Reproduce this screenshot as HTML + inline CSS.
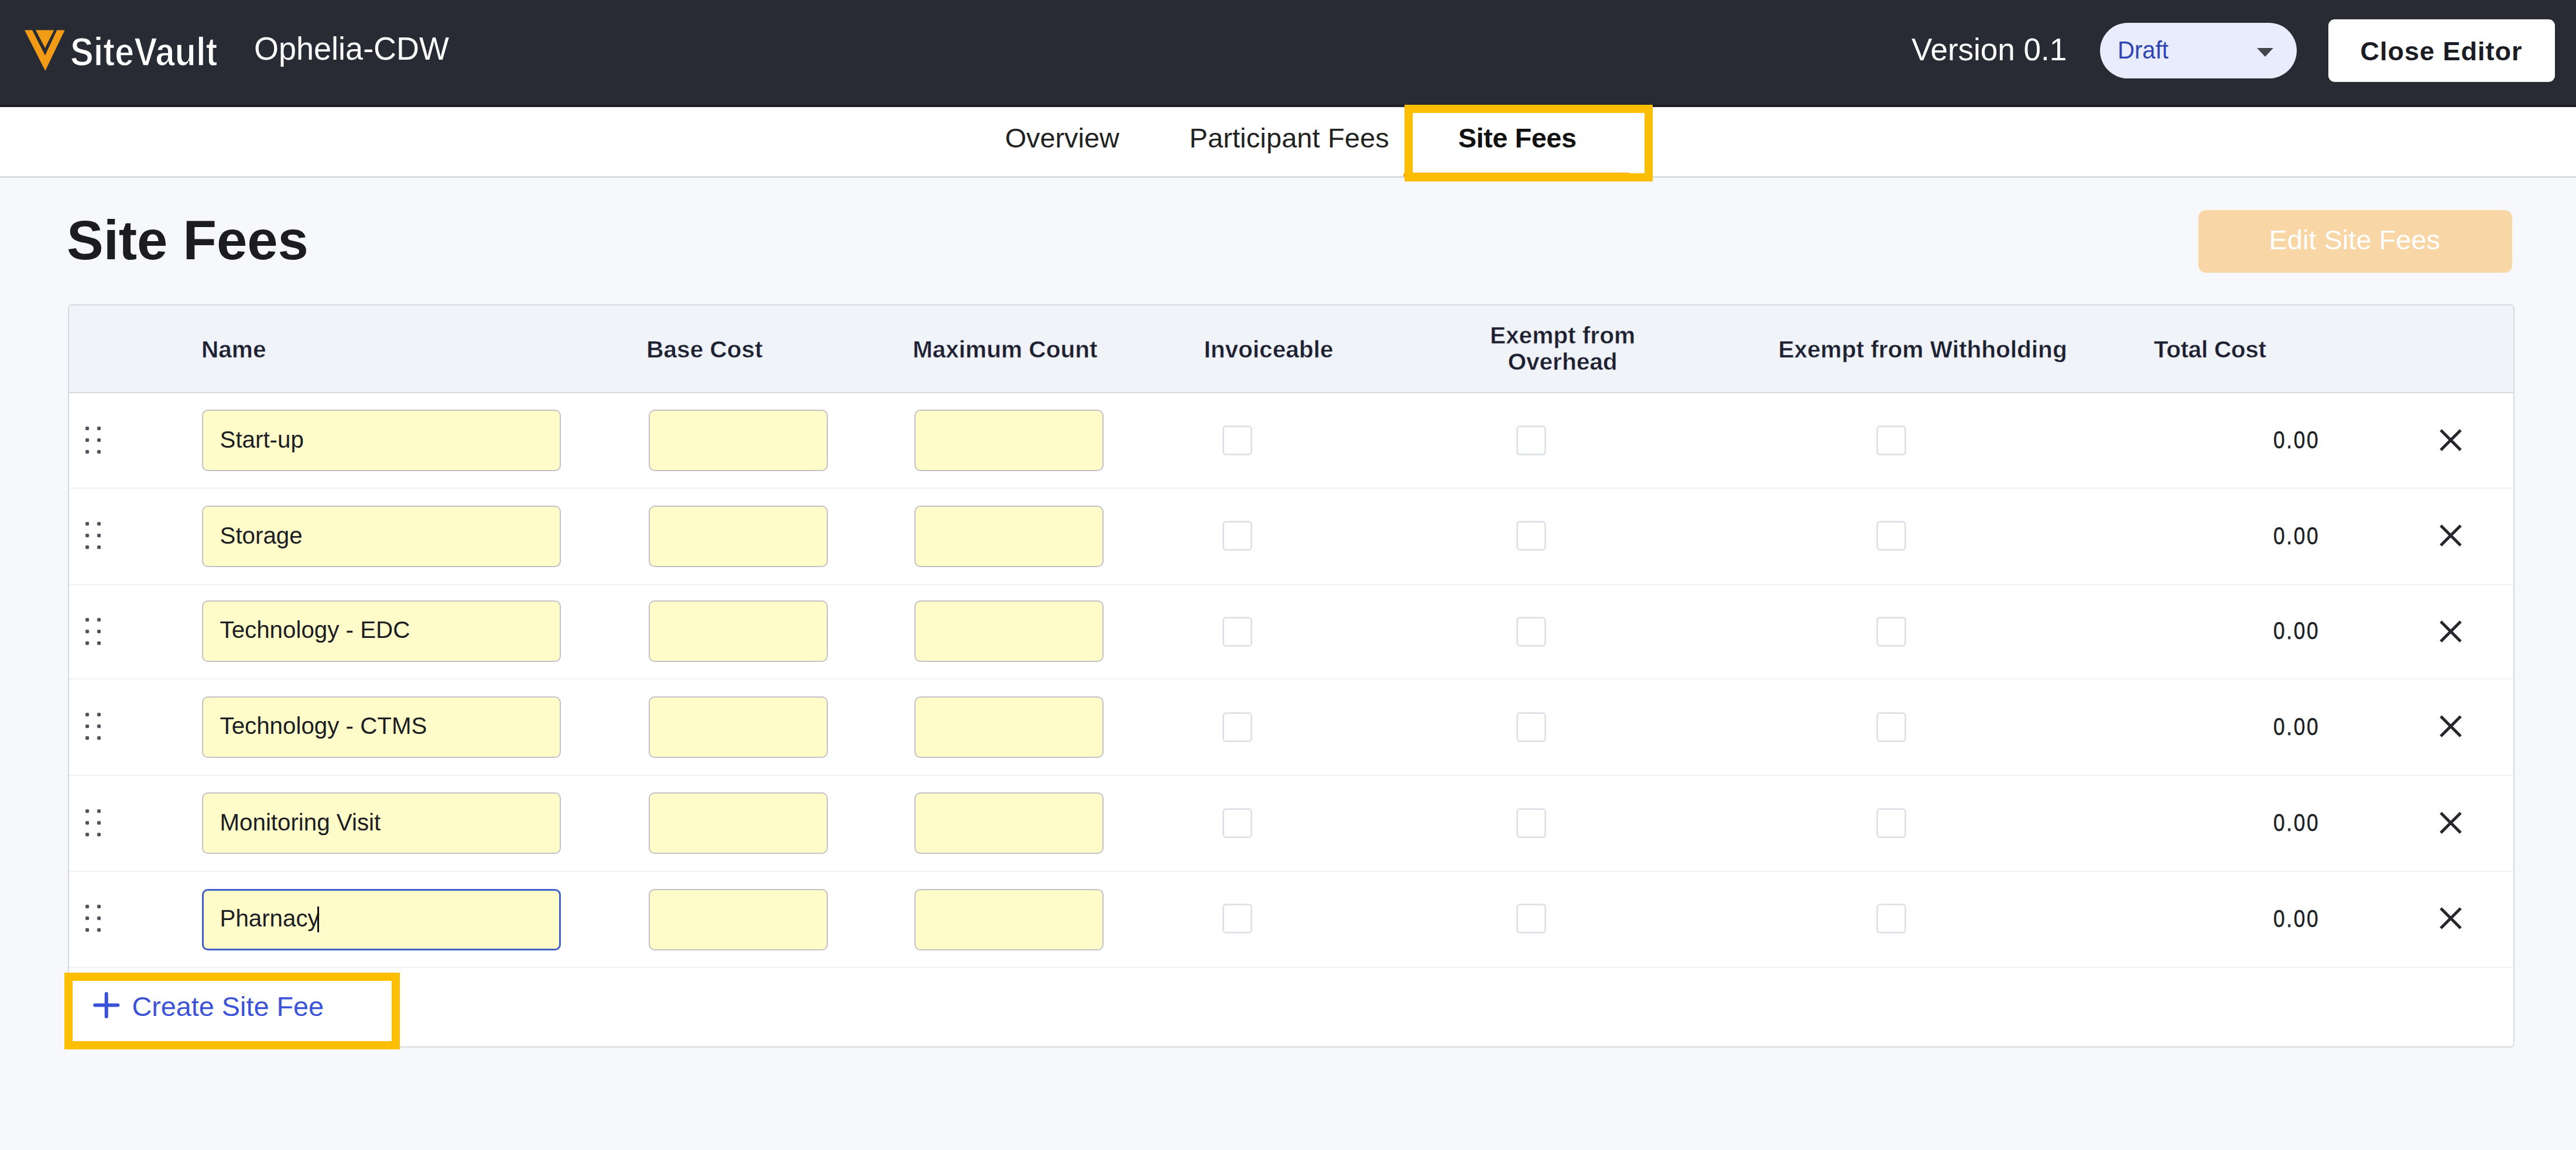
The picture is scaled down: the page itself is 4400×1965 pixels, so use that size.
<!DOCTYPE html>
<html>
<head>
<meta charset="utf-8">
<style>
html,body{margin:0;padding:0;}
body{width:4400px;height:1965px;position:relative;overflow:hidden;background:#f7f8fc;font-family:"Liberation Sans",sans-serif;color:#1d1f27;}
.a{position:absolute;}
.t{position:absolute;line-height:1;white-space:nowrap;}
.hl{position:absolute;border:14px solid #fdbe00;box-sizing:border-box;}
.th{font-weight:700;color:#1d2030;}
.inp{position:absolute;box-sizing:border-box;height:105px;border:2px solid #c3c2c7;border-radius:10px;background:#fffcca;}
.cb{position:absolute;width:51px;height:51px;box-sizing:border-box;border:3px solid #e0e3e8;border-radius:6px;background:#fff;}
.dot{position:absolute;width:6px;height:6px;background:#50535b;border-radius:2px;box-shadow:0 0 1.2px rgba(80,83,91,0.6);}
</style>
</head>
<body>
<div class="a" style="left:0;top:0;width:4400px;height:182.5px;background:#282b34;"></div>
<div class="a" style="left:0;top:179px;width:4400px;height:3px;background:#1c1e26;"></div>
<svg class="a" style="left:0;top:0" width="200" height="182" viewBox="0 0 200 182"><path fill="#f29b16" fill-rule="evenodd" d="M42,51.6 L110.6,51.6 L77.3,121 Z M55,51.6 L97.3,51.6 L77,94.8 Z M60.9,51.6 L92.2,51.6 L77,81.9 Z"/></svg>
<div class="t" style="left:120.0px;top:53.5px;font-size:69px;font-weight:700;color:#fff;transform:scaleX(0.862);transform-origin:0 0;-webkit-text-stroke:1.5px #282b34;">SiteVault</div>
<div class="t" style="left:434.4px;top:56.3px;font-size:55.5px;color:#fff;transform:scaleX(0.973);transform-origin:0 0;">Ophelia-CDW</div>
<div class="t" style="left:3265.0px;top:58.1px;font-size:53px;color:#fff;">Version 0.1</div>
<div class="a" style="left:3587px;top:39px;width:336px;height:95px;border-radius:48px;background:#e8ecfd;"></div>
<div class="t" style="left:3616.5px;top:65.0px;font-size:42px;color:#2e45b4;transform:scaleX(0.955);transform-origin:0 0;">Draft</div>
<svg class="a" style="left:3850px;top:78px" width="40" height="24" viewBox="0 0 40 24"><path d="M5,4 L33,4 L19,19 Z" fill="#45464b"/></svg>
<div class="a" style="left:3977px;top:33px;width:387px;height:107px;border-radius:11px;background:#fff;"></div>
<div class="t" style="left:4031.4px;top:65.1px;font-size:45px;font-weight:700;color:#1c1d24;letter-spacing:1px;">Close Editor</div>
<div class="a" style="left:0;top:182.5px;width:4400px;height:118.5px;background:#fff;border-bottom:3px solid #d8dbe0;"></div>
<div class="t" style="left:1716.7px;top:212.6px;font-size:46.8px;color:#222;">Overview</div>
<div class="t" style="left:2031.5px;top:212.6px;font-size:46.8px;color:#222;letter-spacing:0.2px;">Participant Fees</div>
<div class="t" style="left:2490.7px;top:212.6px;font-size:46.8px;font-weight:700;color:#111;letter-spacing:-0.4px;">Site Fees</div>
<div class="a" style="left:2397px;top:295px;width:388px;height:8px;border-radius:4px;background:#f5a00f;"></div>
<div class="hl" style="left:2399px;top:179px;width:424px;height:131px;"></div>
<div class="t" style="left:114.0px;top:364.4px;font-size:94px;font-weight:700;color:#1d1d1f;">Site Fees</div>
<div class="a" style="left:3755px;top:359px;width:536px;height:107px;border-radius:13px;background:#f8d6a6;"></div>
<div class="t" style="left:3875.5px;top:386.4px;font-size:47px;color:#fff;">Edit Site Fees</div>
<div class="a" style="left:116px;top:520px;width:4179px;height:1270px;box-sizing:border-box;border:2px solid #d6d9de;border-radius:7px;background:#fff;overflow:hidden;"><div class="a" style="left:0;top:0;width:100%;height:148px;background:#f0f3f8;border-bottom:2px solid #d6d9de;"></div></div>
<div class="t" style="left:344.0px;top:576.6px;font-size:40.6px;font-weight:700;color:#1d2030;letter-spacing:0px;-webkit-text-stroke:0.5px #f0f3f8;">Name</div>
<div class="t" style="left:1104.2px;top:576.6px;font-size:40.6px;font-weight:700;color:#1d2030;letter-spacing:0px;-webkit-text-stroke:0.5px #f0f3f8;">Base Cost</div>
<div class="t" style="left:1558.9px;top:576.6px;font-size:40.6px;font-weight:700;color:#1d2030;letter-spacing:0px;-webkit-text-stroke:0.5px #f0f3f8;">Maximum Count</div>
<div class="t" style="left:2056.4px;top:576.6px;font-size:40.6px;font-weight:700;color:#1d2030;letter-spacing:0px;-webkit-text-stroke:0.5px #f0f3f8;">Invoiceable</div>
<div class="t" style="left:3037.4px;top:576.6px;font-size:40.6px;font-weight:700;color:#1d2030;letter-spacing:0px;-webkit-text-stroke:0.5px #f0f3f8;">Exempt from Withholding</div>
<div class="t" style="left:3678.8px;top:576.6px;font-size:40.6px;font-weight:700;color:#1d2030;letter-spacing:-0.35px;-webkit-text-stroke:0.5px #f0f3f8;">Total Cost</div>
<div class="t" style="left:2469px;width:400px;text-align:center;top:552.6px;font-size:40.6px;font-weight:700;color:#1d2030;-webkit-text-stroke:0.5px #f0f3f8;">Exempt from</div>
<div class="t" style="left:2469px;width:400px;text-align:center;top:598.0px;font-size:40.6px;font-weight:700;color:#1d2030;-webkit-text-stroke:0.5px #f0f3f8;">Overhead</div>
<div class="a" style="left:118px;top:833px;width:4175px;height:2px;background:#eef1f5;"></div>
<div class="dot" style="left:146px;top:728.5px;"></div><div class="dot" style="left:146px;top:748.5px;"></div><div class="dot" style="left:146px;top:768.5px;"></div><div class="dot" style="left:166px;top:728.5px;"></div><div class="dot" style="left:166px;top:748.5px;"></div><div class="dot" style="left:166px;top:768.5px;"></div>
<div class="inp" style="left:345px;top:700.4px;width:613px;"></div><div class="inp" style="left:1108px;top:700.4px;width:306px;"></div><div class="inp" style="left:1562px;top:700.4px;width:323px;"></div>
<div class="t" style="left:375.5px;top:732.0px;font-size:40.3px;color:#1c1e24;">Start-up</div>
<div class="cb" style="left:2087.5px;top:727.0px;"></div><div class="cb" style="left:2590.0px;top:727.0px;"></div><div class="cb" style="left:3204.5px;top:727.0px;"></div>
<div class="t" style="left:3883.0px;top:730.3px;font-size:43px;color:#1c1e24;transform:scaleX(0.82);transform-origin:0 0;letter-spacing:3.2px;-webkit-text-stroke:0.5px #1c1e24;">0.00</div>
<svg class="a" style="left:4161px;top:726.5px" width="50" height="50" viewBox="0 0 50 50"><path d="M8,8 L42,42 M42,8 L8,42" stroke="#25272d" stroke-width="5"/></svg>
<div class="a" style="left:118px;top:998.3px;width:4175px;height:2px;background:#eef1f5;"></div>
<div class="dot" style="left:146px;top:891.5px;"></div><div class="dot" style="left:146px;top:911.5px;"></div><div class="dot" style="left:146px;top:931.5px;"></div><div class="dot" style="left:166px;top:891.5px;"></div><div class="dot" style="left:166px;top:911.5px;"></div><div class="dot" style="left:166px;top:931.5px;"></div>
<div class="inp" style="left:345px;top:864.4px;width:613px;"></div><div class="inp" style="left:1108px;top:864.4px;width:306px;"></div><div class="inp" style="left:1562px;top:864.4px;width:323px;"></div>
<div class="t" style="left:375.5px;top:896.0px;font-size:40.3px;color:#1c1e24;">Storage</div>
<div class="cb" style="left:2087.5px;top:890.0px;"></div><div class="cb" style="left:2590.0px;top:890.0px;"></div><div class="cb" style="left:3204.5px;top:890.0px;"></div>
<div class="t" style="left:3883.0px;top:894.3px;font-size:43px;color:#1c1e24;transform:scaleX(0.82);transform-origin:0 0;letter-spacing:3.2px;-webkit-text-stroke:0.5px #1c1e24;">0.00</div>
<svg class="a" style="left:4161px;top:889.5px" width="50" height="50" viewBox="0 0 50 50"><path d="M8,8 L42,42 M42,8 L8,42" stroke="#25272d" stroke-width="5"/></svg>
<div class="a" style="left:118px;top:1159px;width:4175px;height:2px;background:#eef1f5;"></div>
<div class="dot" style="left:146px;top:1055.7px;"></div><div class="dot" style="left:146px;top:1075.7px;"></div><div class="dot" style="left:146px;top:1095.7px;"></div><div class="dot" style="left:166px;top:1055.7px;"></div><div class="dot" style="left:166px;top:1075.7px;"></div><div class="dot" style="left:166px;top:1095.7px;"></div>
<div class="inp" style="left:345px;top:1025.7px;width:613px;"></div><div class="inp" style="left:1108px;top:1025.7px;width:306px;"></div><div class="inp" style="left:1562px;top:1025.7px;width:323px;"></div>
<div class="t" style="left:375.5px;top:1057.3px;font-size:40.3px;color:#1c1e24;">Technology - EDC</div>
<div class="cb" style="left:2087.5px;top:1054.2px;"></div><div class="cb" style="left:2590.0px;top:1054.2px;"></div><div class="cb" style="left:3204.5px;top:1054.2px;"></div>
<div class="t" style="left:3883.0px;top:1055.6px;font-size:43px;color:#1c1e24;transform:scaleX(0.82);transform-origin:0 0;letter-spacing:3.2px;-webkit-text-stroke:0.5px #1c1e24;">0.00</div>
<svg class="a" style="left:4161px;top:1053.7px" width="50" height="50" viewBox="0 0 50 50"><path d="M8,8 L42,42 M42,8 L8,42" stroke="#25272d" stroke-width="5"/></svg>
<div class="a" style="left:118px;top:1324px;width:4175px;height:2px;background:#eef1f5;"></div>
<div class="dot" style="left:146px;top:1218.4px;"></div><div class="dot" style="left:146px;top:1238.4px;"></div><div class="dot" style="left:146px;top:1258.4px;"></div><div class="dot" style="left:166px;top:1218.4px;"></div><div class="dot" style="left:166px;top:1238.4px;"></div><div class="dot" style="left:166px;top:1258.4px;"></div>
<div class="inp" style="left:345px;top:1189.8px;width:613px;"></div><div class="inp" style="left:1108px;top:1189.8px;width:306px;"></div><div class="inp" style="left:1562px;top:1189.8px;width:323px;"></div>
<div class="t" style="left:375.5px;top:1221.4px;font-size:40.3px;color:#1c1e24;">Technology - CTMS</div>
<div class="cb" style="left:2087.5px;top:1216.9px;"></div><div class="cb" style="left:2590.0px;top:1216.9px;"></div><div class="cb" style="left:3204.5px;top:1216.9px;"></div>
<div class="t" style="left:3883.0px;top:1219.7px;font-size:43px;color:#1c1e24;transform:scaleX(0.82);transform-origin:0 0;letter-spacing:3.2px;-webkit-text-stroke:0.5px #1c1e24;">0.00</div>
<svg class="a" style="left:4161px;top:1216.4px" width="50" height="50" viewBox="0 0 50 50"><path d="M8,8 L42,42 M42,8 L8,42" stroke="#25272d" stroke-width="5"/></svg>
<div class="a" style="left:118px;top:1488px;width:4175px;height:2px;background:#eef1f5;"></div>
<div class="dot" style="left:146px;top:1382.8px;"></div><div class="dot" style="left:146px;top:1402.8px;"></div><div class="dot" style="left:146px;top:1422.8px;"></div><div class="dot" style="left:166px;top:1382.8px;"></div><div class="dot" style="left:166px;top:1402.8px;"></div><div class="dot" style="left:166px;top:1422.8px;"></div>
<div class="inp" style="left:345px;top:1354.4px;width:613px;"></div><div class="inp" style="left:1108px;top:1354.4px;width:306px;"></div><div class="inp" style="left:1562px;top:1354.4px;width:323px;"></div>
<div class="t" style="left:375.5px;top:1386.0px;font-size:40.3px;color:#1c1e24;">Monitoring Visit</div>
<div class="cb" style="left:2087.5px;top:1381.3px;"></div><div class="cb" style="left:2590.0px;top:1381.3px;"></div><div class="cb" style="left:3204.5px;top:1381.3px;"></div>
<div class="t" style="left:3883.0px;top:1384.3px;font-size:43px;color:#1c1e24;transform:scaleX(0.82);transform-origin:0 0;letter-spacing:3.2px;-webkit-text-stroke:0.5px #1c1e24;">0.00</div>
<svg class="a" style="left:4161px;top:1380.8px" width="50" height="50" viewBox="0 0 50 50"><path d="M8,8 L42,42 M42,8 L8,42" stroke="#25272d" stroke-width="5"/></svg>
<div class="a" style="left:118px;top:1652px;width:4175px;height:2px;background:#eef1f5;"></div>
<div class="dot" style="left:146px;top:1545.6px;"></div><div class="dot" style="left:146px;top:1565.6px;"></div><div class="dot" style="left:146px;top:1585.6px;"></div><div class="dot" style="left:166px;top:1545.6px;"></div><div class="dot" style="left:166px;top:1565.6px;"></div><div class="dot" style="left:166px;top:1585.6px;"></div>
<div class="inp" style="left:345px;top:1518.5px;width:613px;border:3px solid #4260cb;"></div><div class="inp" style="left:1108px;top:1518.5px;width:306px;"></div><div class="inp" style="left:1562px;top:1518.5px;width:323px;"></div>
<div class="t" style="left:375.5px;top:1550.1px;font-size:40.3px;color:#1c1e24;">Pharnacy</div>
<div class="a" style="left:542px;top:1549px;width:2.5px;height:44px;background:#111;"></div>
<div class="cb" style="left:2087.5px;top:1544.1px;"></div><div class="cb" style="left:2590.0px;top:1544.1px;"></div><div class="cb" style="left:3204.5px;top:1544.1px;"></div>
<div class="t" style="left:3883.0px;top:1548.4px;font-size:43px;color:#1c1e24;transform:scaleX(0.82);transform-origin:0 0;letter-spacing:3.2px;-webkit-text-stroke:0.5px #1c1e24;">0.00</div>
<svg class="a" style="left:4161px;top:1543.6px" width="50" height="50" viewBox="0 0 50 50"><path d="M8,8 L42,42 M42,8 L8,42" stroke="#25272d" stroke-width="5"/></svg>
<svg class="a" style="left:150px;top:1685px" width="64" height="64" viewBox="0 0 64 64"><path d="M31.7,13 V52 M12.2,32.6 H51.2" stroke="#3b50d8" stroke-width="6" stroke-linecap="round"/></svg>
<div class="t" style="left:225.4px;top:1697.0px;font-size:46.8px;color:#3c52d8;">Create Site Fee</div>
<div class="hl" style="left:110px;top:1662px;width:573px;height:131px;"></div>
</body>
</html>
